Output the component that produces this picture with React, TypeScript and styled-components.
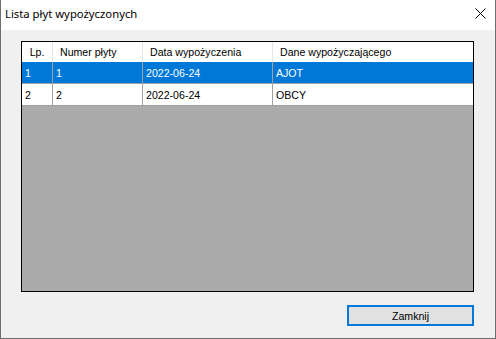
import React from "react";
import styled, { createGlobalStyle } from "styled-components";

const UI_FONT = `"Liberation Sans", Arial, sans-serif`;
const TITLE_FONT = `"Noto Sans", "Open Sans", sans-serif`;

const Global = createGlobalStyle`
  html, body { margin: 0; padding: 0; background: #ffffff; }
  body { font-family: ${UI_FONT}; font-size: 11px; }
`;

const Window = styled.div`
  width: 496px;
  height: 339px;
  box-sizing: border-box;
  border: 1px solid #6e6e6e;
  border-top: none;
  display: flex;
  flex-direction: column;
  background: #f0f0f0;
`;

const TitleBar = styled.div`
  height: 30px;
  background: #ffffff;
  display: flex;
  align-items: center;
  justify-content: space-between;
  padding-left: 4px;
  padding-right: 9px;
  flex-shrink: 0;
`;

const Title = styled.span`
  font-family: ${TITLE_FONT};
  font-size: 11.3px;
  color: #000;
  padding-bottom: 3px;
`;

const CloseIcon = styled.svg`
  width: 11px;
  height: 11px;
  margin-bottom: 3px;
`;

const Body = styled.div`
  flex: 1;
  display: flex;
  flex-direction: column;
  padding: 11px 21px 0 20px;
`;

const Grid = styled.div`
  width: 453px;
  height: 251px;
  box-sizing: border-box;
  border: 1px solid #000;
  background: #ababab;
  display: flex;
  flex-direction: column;
`;

const Row = styled.div<{ $header?: boolean }>`
  display: grid;
  grid-template-columns: 30px 89px 129px 200px;
  column-gap: 1px;
  height: ${(p) => (p.$header ? "20px" : "21px")};
  background: ${(p) => (p.$header ? "#e5e5e5" : "#a0a0a0")};
  border-bottom: ${(p) => (p.$header ? "none" : "1px solid #a0a0a0")};
  width: 451px;
`;

const Cell = styled.div<{ $selected?: boolean; $header?: boolean; $center?: boolean }>`
  background: ${(p) => (p.$selected ? "#0078d7" : "#ffffff")};
  color: ${(p) => (p.$selected ? "#ffffff" : "#000000")};
  display: flex;
  align-items: center;
  justify-content: ${(p) => (p.$center ? "center" : "flex-start")};
  padding-left: ${(p) => (p.$center ? "0" : p.$header ? "7px" : "3px")};
  font-size: 10.6px;
  white-space: nowrap;
  overflow: hidden;
`;

const Footer = styled.div`
  display: flex;
  justify-content: flex-end;
  padding-top: 13px;
`;

const Button = styled.button`
  width: 127px;
  height: 21px;
  box-sizing: border-box;
  border: 2px solid #0078d7;
  background: #e1e1e1;
  font-family: ${UI_FONT};
  font-size: 10.6px;
  color: #000;
  padding: 0;
  display: flex;
  align-items: center;
  justify-content: center;
`;

const rows = [
  { lp: "1", nr: "1", date: "2022-06-24", who: "AJOT", selected: true },
  { lp: "2", nr: "2", date: "2022-06-24", who: "OBCY", selected: false },
];

export default function App() {
  return (
    <>
      <Global />
      <Window>
        <TitleBar>
          <Title>Lista płyt wypożyczonych</Title>
          <CloseIcon viewBox="0 0 11 11">
            <path d="M0.5 0.5 L10.5 10.5 M10.5 0.5 L0.5 10.5" stroke="#000" strokeWidth="1" fill="none" />
          </CloseIcon>
        </TitleBar>
        <Body>
          <Grid>
            <Row $header>
              <Cell $header $center>Lp.</Cell>
              <Cell $header>Numer płyty</Cell>
              <Cell $header>Data wypożyczenia</Cell>
              <Cell $header>Dane wypożyczającego</Cell>
            </Row>
            {rows.map((r) => (
              <Row key={r.lp}>
                <Cell $selected={r.selected}>{r.lp}</Cell>
                <Cell $selected={r.selected}>{r.nr}</Cell>
                <Cell $selected={r.selected}>{r.date}</Cell>
                <Cell $selected={r.selected}>{r.who}</Cell>
              </Row>
            ))}
          </Grid>
          <Footer>
            <Button>Zamknij</Button>
          </Footer>
        </Body>
      </Window>
    </>
  );
}
